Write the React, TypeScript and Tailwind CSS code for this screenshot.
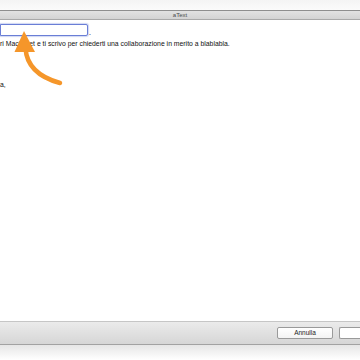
import React from "react";

export default function App() {
  const font = { fontFamily: '"Liberation Sans", Arial, sans-serif' };
  return (
    <div className="w-[360px] h-[360px] flex flex-col bg-white overflow-hidden relative" style={font}>
      <div className="h-[10px] bg-gradient-to-b from-[#f4f4f4] to-[#fbfbfb]" />
      <div className="h-[10px] border-t border-t-[#8e8e8e] border-b border-b-[#a9a9a9] bg-gradient-to-b from-[#e2e2e2] to-[#d3d3d3] flex items-center justify-center">
        <span className="text-[6px] leading-none text-[#4a4a4a]">aText</span>
      </div>
      <div className="flex-1 relative">
        <div className="flex items-end pt-[4px]">
          <div className="w-[88px] h-[12px] border border-[#6a7ed6] rounded-r-[2px] bg-white shadow-[0_0_1px_1px_rgba(120,140,220,0.35)]" />
          <span className="text-[7px] leading-none text-black ml-[1px]">.</span>
        </div>
        <div className="mt-[4px] text-[6.85px] leading-[8px] text-[#111] whitespace-nowrap">
          ri Macitynet e ti scrivo per chiederti una collaborazione in merito a blablabla.
        </div>
        <div className="mt-[33px] text-[6.85px] leading-[8px] text-[#111] whitespace-nowrap">a,</div>
        <svg className="absolute left-0 top-0" width="80" height="80" viewBox="0 0 80 80">
          <path d="M25.5 28 Q27 54 60 63" fill="none" stroke="#f5962a" strokeWidth="4.5" strokeLinecap="round" />
          <polygon points="24,11 14.5,32 35,32" fill="#f5962a" />
        </svg>
      </div>
      <div className="h-[24px] border-t border-t-[#c6c6c6] border-b border-b-[#a2a2a2] bg-gradient-to-b from-[#ebebeb] to-[#d6d6d6] flex items-center justify-end gap-[6px]">
        <div className="w-[56px] h-[12px] rounded-[2px] border border-[#9a9a9a] bg-gradient-to-b from-white to-[#f3f3f3] flex items-center justify-center">
          <span className="text-[6.5px] leading-none text-[#222]">Annulla</span>
        </div>
        <div className="w-[21px] h-[12px] rounded-l-[2px] border border-r-0 border-[#9a9a9a] bg-white" />
      </div>
      <div className="h-[15px] bg-gradient-to-b from-[#e6e6e6] to-white" />
    </div>
  );
}
